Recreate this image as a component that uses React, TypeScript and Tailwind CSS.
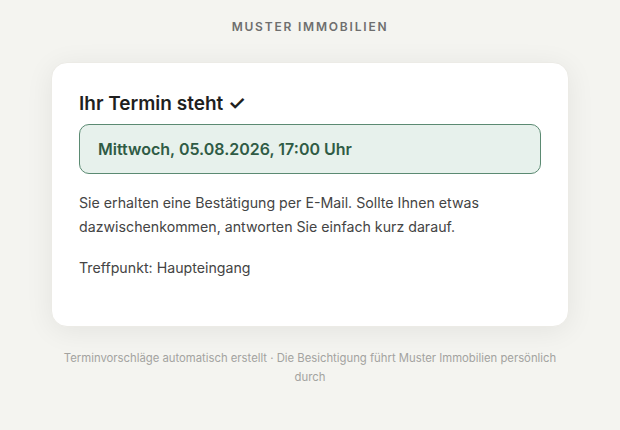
export default function App() {
  return (
    <div className="min-h-[430px] w-full bg-[#f4f4f0] font-['Inter',sans-serif] flex flex-col items-center pt-[19px]">
      <div className="text-[12px] leading-4 font-semibold tracking-[0.15em] text-[#6e6e6e]">
        MUSTER IMMOBILIEN
      </div>
      <div className="mt-[27px] w-[518px] rounded-[16px] bg-white border border-[#ecebe6] shadow-[0_4px_28px_rgba(0,0,0,0.07)] px-[27px] pt-[27px] pb-[46px]">
        <h1 className="text-[19px] leading-7 font-semibold text-[#1f1f1f]">
          Ihr Termin steht <span className="text-[20px] leading-none">✓</span>
        </h1>
        <div className="mt-[6px] h-[50px] flex items-center rounded-[10px] border border-[#5b8a72] bg-[#e7f1ec] px-[18px]">
          <span className="text-[16px] font-semibold text-[#2f5b45]">
            Mittwoch, 05.08.2026, 17:00 Uhr
          </span>
        </div>
        <p className="mt-[17px] text-[14.2px] leading-6 text-[#444]">
          Sie erhalten eine Bestätigung per E-Mail. Sollte Ihnen etwas dazwischenkommen, antworten Sie einfach kurz darauf.
        </p>
        <p className="mt-[17px] text-[14.2px] leading-6 text-[#444]">Treffpunkt: Haupteingang</p>
      </div>
      <p className="mt-[22px] w-[500px] text-center text-[11.3px] leading-[19px] text-[#a3a3a0]">
        Terminvorschläge automatisch erstellt · Die Besichtigung führt Muster Immobilien persönlich durch
      </p>
    </div>
  );
}
